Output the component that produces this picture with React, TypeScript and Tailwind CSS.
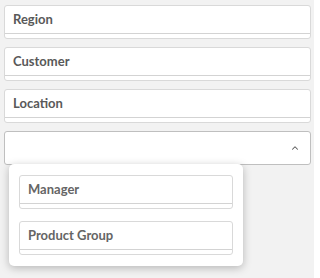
import { ChevronUp } from "lucide-react";
import React from "react";

const font = { fontFamily: "Lato, 'Open Sans', sans-serif" };

interface FilterCardProps {
  title: string;
  muted?: boolean;
}

const FilterCard: React.FC<FilterCardProps> = ({ title, muted }) => {
  return (
    <div className="h-[34px] rounded-[3px] border border-[#d9d9d9] bg-white flex flex-col">
      <div
        className={`h-[28px] flex items-center px-2 border-b border-[#d3d3d3] text-[13px] font-bold ${
          muted ? "text-[#656565]" : "text-[#595959]"
        }`}
      >
        {title}
      </div>
    </div>
  );
};

export default function App() {
  return (
    <div className="w-[314px] h-[278px] bg-[#f2f2f2] px-1 pt-[5px]" style={font}>
      <div className="flex flex-col gap-2 w-[307px]">
        <FilterCard title="Region" />
        <FilterCard title="Customer" />
        <FilterCard title="Location" />
        <div className="relative">
          <div className="h-[34px] rounded-[3px] border border-[#bfbfbf] bg-white flex items-center justify-end pr-[10px]">
            <ChevronUp className="w-[10px] h-[10px] text-[#595959]" strokeWidth={2.5} />
          </div>
          <div className="absolute left-[5px] top-[33px] w-[234px] rounded-[5px] bg-white shadow-[0_2px_8px_rgba(0,0,0,0.25)] px-[10px] pt-[11px] pb-[11px] flex flex-col gap-[12px]">
            <FilterCard title="Manager" muted />
            <FilterCard title="Product Group" muted />
          </div>
        </div>
      </div>
    </div>
  );
}
